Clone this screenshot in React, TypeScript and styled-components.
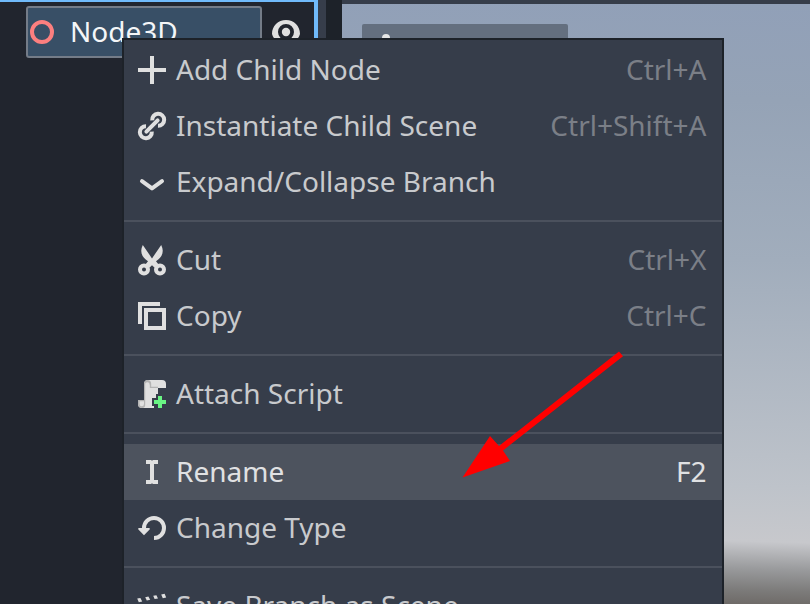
import React from "react";
import styled, { createGlobalStyle } from "styled-components";

const GlobalStyle = createGlobalStyle`
  * { box-sizing: border-box; }
  html, body { margin: 0; padding: 0; overflow: hidden; }
  body { background: #21252e; font-family: "Noto Sans", sans-serif; }
`;

const Editor = styled.div`
  position: relative;
  display: flex;
  width: 810px;
  height: 604px;
  overflow: hidden;
  font-size: 28px;
  line-height: 38px;
  background: #1d2229;
`;

const SceneDock = styled.section`
  width: 318px;
  border: solid #70bafa;
  border-width: 2px 4px 0 0;
  background: #21252e;
  padding: 4px 10px 0 26px;
  display: flex;
  align-items: flex-start;
  gap: 8px;
`;

const DockEdge = styled.div`
  width: 8px;
  margin-right: 16px;
  background: #363d4a;
`;

const TreeItem = styled.div`
  width: 236px;
  height: 52px;
  display: flex;
  align-items: center;
  gap: 12px;
  color: #f4f6f8;
  background: #384f66;
  border: 2px solid #747c88;
  border-radius: 3px;
`;

const NodeName = styled.span`
  padding-bottom: 2px;
`;

const Visibility = styled.div`
  display: flex;
  padding-top: 10px;
`;

const Viewport = styled.main`
  flex: 1;
  border-top: 4px solid #363d4a;
  padding: 20px;
  background: linear-gradient(181.5deg, #91a0b8 0%, #95a3b6 16%, #a1adbc 42%, #bec3ca 79%, #c7c8cc 88%, #999a9c 92.5%, #7c7b7a 96%, #645e5a 100%);
`;

const ViewButton = styled.div`
  width: 206px;
  height: 52px;
  padding: 10px 20px;
  border-radius: 2px;
  background: #646f7f;
`;

const ViewDot = styled.div`
  width: 8px;
  height: 8px;
  border-radius: 4px;
  background: #e6e6e6;
`;

const Menu = styled.div`
  position: absolute;
  left: 122px;
  top: 38px;
  width: 602px;
  height: 620px;
  padding-top: 2px;
  border: 2px solid #1d2229;
  background: #363d4a;
`;

const Item = styled.div<{ $active?: boolean }>`
  height: 56px;
  padding: 0 15.5px 0 12px;
  display: flex;
  align-items: center;
  color: ${(p) => (p.$active ? "#e0e1e3" : "#c8cacd")};
  background: ${(p) => (p.$active ? "#4d535e" : "transparent")};
`;

const Label = styled.span`
  margin-left: 8px;
  padding-bottom: 2px;
  white-space: nowrap;
`;

const Shortcut = styled.span<{ $active?: boolean }>`
  margin-left: auto;
  padding-bottom: 2px;
  color: ${(p) => (p.$active ? "#e0e1e3" : "#7b7f87")};
`;

const Separator = styled.div`
  height: 2px;
  margin: 10px 0;
  background: #4b515d;
`;

const Icon = styled.svg.attrs({ viewBox: "0 0 16 16" })`
  width: 32px;
  height: 32px;
  flex: none;
  display: block;
  fill: #e0e0e0;
`;

const NodeIcon = styled(Icon)`
  margin-left: -2px;
`;

const Pointer = styled.svg`
  position: absolute;
  left: 456px;
  top: 346px;
  width: 172px;
  height: 138px;
`;

const icons: Record<string, React.ReactNode> = {
  add: <path d="M7 1v6H1v2h6v6h2V9h6V7H9V1z" />,
  link: (
    <g fill="none" stroke="#e0e0e0" strokeWidth="2">
      <path d="M8.1 5.2A3 3 0 1 1 11 7.9" />
      <path d="M7.9 10.8A3 3 0 1 1 5 8.1" />
      <path d="M5.2 10.8l5.6-5.6" strokeLinecap="round" />
    </g>
  ),
  chevron: <path d="M3 7.6l5 3.6 5-3.6" fill="none" stroke="#e0e0e0" strokeWidth="2" strokeLinecap="round" strokeLinejoin="round" />,
  cut: (
    <>
      <path d="M3.4.5C1.9 3.4 2.5 6.4 6 8.6L4.5 10.5l2.3 1.2L8 10.6l1.2 1.1 2.3-1.2L10 8.6c3.5-2.2 4.1-5.2 2.6-8.1L8 7.2z" />
      <g fill="none" stroke="#e0e0e0" strokeWidth="2">
        <circle cx="4" cy="12.8" r="2" />
        <circle cx="12" cy="12.8" r="2" />
      </g>
    </>
  ),
  copy: <path fillRule="evenodd" d="M1 1h11v2H3v9H1zM4 4h11v11H4zM6 6v7h7V6z" />,
  script: (
    <>
      <path d="M6 1h7a2 2 0 0 1 2 2v2h-4v3h-1v2H8v4h1v1H3a2 2 0 0 1-2-2v-2h3V3a2 2 0 0 1 2-2z" />
      <path fill="#b4b4b4" d="M6 1a2 2 0 0 0-2 2v8H1v2a2 2 0 0 0 2 2 1.5 1.5 0 0 0 1.6-1.5V3.4A1 1 0 0 1 6.8 3v2H11v-.6H7.6V3A2 2 0 0 0 6 1z" />
      <path d="M1.8 11.6H4V13a1.1 1.1 0 0 1-2.2 0zM5 3.5h1.8V14H5z" />
      <path fill="#69f584" d="M11 9h2v2h2v2h-2v2h-2v-2H9v-2h2z" />
    </>
  ),
  rename: <path d="M5 2h2.5l.5.4.5-.4H11v2H9v8h2v2H8.5l-.5-.4-.5.4H5v-2h2V4H5z" />,
  reload: (
    <>
      <path d="M4 8.5V8a5 5 0 1 1 5 5" fill="none" stroke="#e0e0e0" strokeWidth="2" />
      <path d="M1.5 8h5a.4.4 0 0 1 .3.7L4 11.6 1.2 8.7A.4.4 0 0 1 1.5 8z" />
    </>
  ),
  save: <path d="M.6 4.3l1.6-.3.9 1.7-1.7.4zM4.6 3.6l1.6-.3.9 1.6-1.7.4zM8.6 2.9l1.6-.3.8 1.6-1.7.3zM12.6 2.2l1.7-.3.8 1.9-1.7.3zM1 8h14v6H1z" />,
  node: <circle cx="8" cy="8" r="5" fill="none" stroke="#fc7f7f" strokeWidth="2" />,
  eye: (
    <>
      <path fillRule="evenodd" d="M8 2C4 2 1 5 1 9c.9 3 3.4 5 7 5s6.1-2 7-5c0-4-3-7-7-7zm0 2a4 4 0 1 1 0 8 4 4 0 0 1 0-8z" />
      <circle cx="8" cy="8" r="2.1" />
    </>
  ),
};

type Entry = { icon: string; text: string; keys?: string; active?: boolean };

const groups: Entry[][] = [
  [
    { icon: "add", text: "Add Child Node", keys: "Ctrl+A" },
    { icon: "link", text: "Instantiate Child Scene", keys: "Ctrl+Shift+A" },
    { icon: "chevron", text: "Expand/Collapse Branch" },
  ],
  [
    { icon: "cut", text: "Cut", keys: "Ctrl+X" },
    { icon: "copy", text: "Copy", keys: "Ctrl+C" },
  ],
  [{ icon: "script", text: "Attach Script" }],
  [
    { icon: "rename", text: "Rename", keys: "F2", active: true },
    { icon: "reload", text: "Change Type" },
  ],
  [{ icon: "save", text: "Save Branch as Scene" }],
];

export default function App() {
  return (
    <Editor>
      <GlobalStyle />
      <SceneDock>
        <TreeItem>
          <NodeIcon>{icons.node}</NodeIcon>
          <NodeName>Node3D</NodeName>
        </TreeItem>
        <Visibility>
          <Icon>{icons.eye}</Icon>
        </Visibility>
      </SceneDock>
      <DockEdge />
      <Viewport>
        <ViewButton>
          <ViewDot />
        </ViewButton>
      </Viewport>
      <Menu>
        {groups.map((group, i) => (
          <React.Fragment key={i}>
            {i > 0 && <Separator />}
            {group.map((e) => (
              <Item key={e.text} $active={e.active}>
                <Icon>{icons[e.icon]}</Icon>
                <Label>{e.text}</Label>
                {e.keys && <Shortcut $active={e.active}>{e.keys}</Shortcut>}
              </Item>
            ))}
          </React.Fragment>
        ))}
      </Menu>
      <Pointer viewBox="456 346 172 138">
        <path d="M619 351.5L623 356.3 503 450.5 510 461 462.5 477.5 490 436 499 446z" fill="#f00" />
      </Pointer>
    </Editor>
  );
}
